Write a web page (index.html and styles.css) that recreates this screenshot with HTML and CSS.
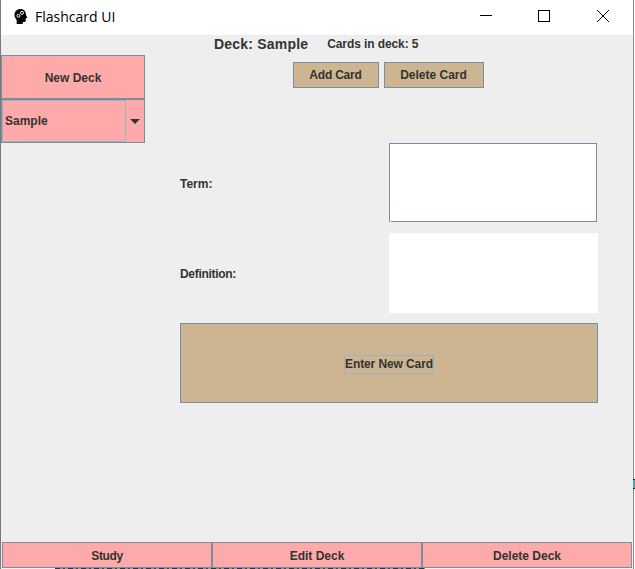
FILE: index.html
```html
<!DOCTYPE html>
<html lang="en">
<head>
<meta charset="utf-8">
<title>Flashcard UI</title>
<link rel="stylesheet" href="styles.css">
</head>
<body>
<div class="window">
  <header class="titlebar">
    <svg class="app-icon" viewBox="0 0 16 18" width="16" height="18">
      <path fill="#000" d="M7.500 1C3.800 1 1.500 3.600 1.500 7c0 1.800.7 3 1.600 4 .5.6.6 1.400.6 2.300V16h6v-2h1.800c.8 0 1.200-.5 1.200-1.200V10.500l1.300-.4c.3-.1.400-.4.200-.7L13 7C13 3.500 11 1 7.500 1z"/>
      <circle cx="9" cy="4.800" r="1.500" fill="none" stroke="#fff" stroke-width="1"/>
      <circle cx="5.500" cy="7.800" r="1.500" fill="none" stroke="#fff" stroke-width="1"/>
    </svg>
    <span class="app-title">Flashcard UI</span>
    <div class="win-controls">
      <span class="win-btn"><svg width="14" height="14" viewBox="0 0 14 14"><path d="M1 6.500h12" stroke="#000" fill="none"/></svg></span>
      <span class="win-btn"><svg width="14" height="14" viewBox="0 0 14 14"><rect x="1.500" y="1.500" width="11" height="11" stroke="#000" fill="none"/></svg></span>
      <span class="win-btn"><svg width="14" height="14" viewBox="0 0 14 14"><path d="M1 1l12 12M13 1L1 13" stroke="#000" fill="none"/></svg></span>
    </div>
  </header>
  <div class="content">
    <aside class="sidebar">
      <button class="btn pink new-deck">New Deck</button>
      <div class="combo">
        <span class="combo-value">Sample</span>
        <span class="combo-arrow"><svg width="10" height="5" viewBox="0 0 10 5"><path d="M0 0h10L5 5z" fill="#333"/></svg></span>
      </div>
    </aside>
    <main class="main">
      <div class="deck-info">
        <span class="deck-name">Deck: Sample</span>
        <span class="deck-count">Cards in deck: 5</span>
      </div>
      <div class="card-actions">
        <button class="btn tan add-card">Add Card</button>
        <button class="btn tan delete-card">Delete Card</button>
      </div>
      <div class="field term-row">
        <span class="field-label">Term:</span>
        <div class="input term-input"></div>
      </div>
      <div class="field def-row">
        <span class="field-label definition">Definition:</span>
        <div class="input def-input"></div>
      </div>
      <button class="btn tan enter-card"><span class="focus-ring">Enter New Card</span></button>
    </main>
  </div>
  <footer class="footer">
    <button class="btn pink foot-btn study">Study</button>
    <button class="btn pink foot-btn">Edit Deck</button>
    <button class="btn pink foot-btn">Delete Deck</button>
  </footer>
  <div class="under-strip"></div>
</div>
</body>
</html>
```
FILE: styles.css
```css
* { box-sizing: border-box; }
html, body { margin: 0; padding: 0; height: 100%; overflow: hidden; background: #fff; }
body { font-family: "Liberation Sans", Arial, sans-serif; font-size: 12px; font-weight: 700; color: #333; }
.window { position: relative; width: 634px; height: 569px; display: flex; flex-direction: column; background: #eeeeee; border-left: 1px solid #7a7a7a; border-right: 1px solid #8a8a8a; }
.window::after { content: ""; position: absolute; left: 632px; top: 479px; width: 2px; height: 8px; background: #5f9ea0; border-top: 1px solid #10204a; border-bottom: 1px solid #10204a; }
.titlebar { height: 35px; flex: none; background: #fff; display: flex; align-items: center; padding-left: 12px; }
.app-icon { margin-top: -2px; }
.app-title { margin-left: 6px; font-family: "Open Sans", sans-serif; font-weight: 400; font-size: 14px; color: #000; margin-top: -2px; }
.win-controls { margin-left: auto; display: flex; margin-right: 1px; }
.win-btn { width: 58.500px; height: 30px; display: flex; align-items: center; justify-content: center; margin-top: -3px; }
.content { flex: 1; display: flex; min-height: 0; }
.sidebar { width: 144px; flex: none; padding-top: 20px; }
.btn { font: inherit; color: inherit; border: 1px solid #7b8ea0; padding: 0; display: flex; align-items: center; justify-content: center; }
.pink { background: #ffaaaa; }
.tan { background: #cdb591; }
.new-deck { width: 144px; height: 44px; padding-top: 2px; }
.combo { height: 44px; display: flex; background: #ffaaaa; border: 1px solid #7b8ea0; }
.combo-value { width: 124px; padding-left: 2px; display: flex; align-items: center; border: 1px solid #9ab0c8; }
.combo-arrow { flex: 1; display: flex; align-items: center; justify-content: center; }
.main { width: 418px; margin-left: 35px; flex: none; }
.deck-info { height: 17px; display: flex; align-items: center; padding-left: 34px; }
.deck-name { font-size: 14px; letter-spacing: .2px; }
.deck-count { margin-left: 19px; letter-spacing: -.1px; }
.card-actions { margin-top: 10px; display: flex; justify-content: center; gap: 5px; padding-right: 2px; }
.add-card { width: 86px; height: 26px; letter-spacing: -.2px; }
.delete-card { width: 100px; height: 26px; }
.field { display: flex; align-items: center; justify-content: space-between; }
.field-label { padding-top: 2px; }
.definition { letter-spacing: -.3px; }
.term-row { margin-top: 55px; height: 79px; }
.def-row { margin-top: 11px; height: 80px; }
.input { background: #fff; height: 100%; }
.term-input { position: relative; width: 208px; border: 1px solid #7b8ea0; margin-right: 1px; }
.term-input::after { content: ""; position: absolute; left: 0; bottom: -1px; width: 1px; height: 1px; background: #fff; }
.def-input { width: 209px; }
.enter-card { width: 418px; height: 80px; margin-top: 10px; padding-top: 2px; }
.focus-ring { outline: 1px solid #9ab0c8; outline-offset: 0; line-height: 17px; letter-spacing: -.1px; }
.footer { flex: none; height: 26px; display: flex; margin: 0 1px; }
.foot-btn { width: 210px; height: 26px; padding-top: 2px; }
.study { letter-spacing: -.4px; }
.under-strip { flex: none; height: 1px; margin-left: 54px; width: 370px; background: repeating-linear-gradient(90deg, #2a3350 0 5px, #8a8a8a 5px 8px, #444 8px 10px, #999 10px 13px); }
```
